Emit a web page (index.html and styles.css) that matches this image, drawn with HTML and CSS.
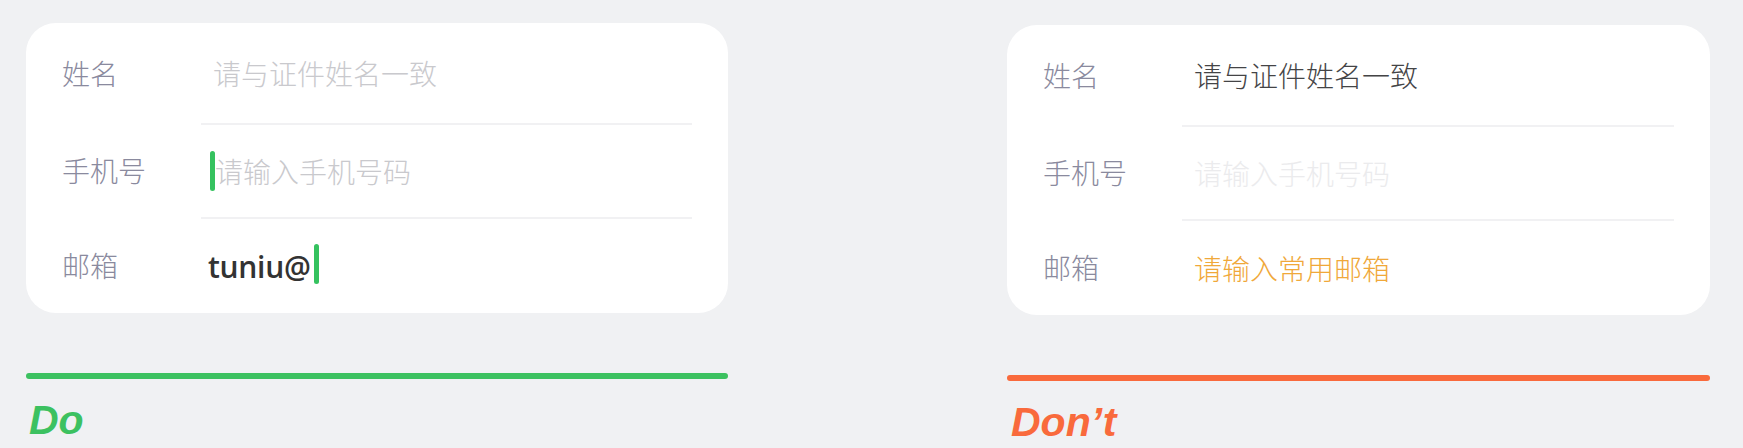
FILE: index.html
```html
<!DOCTYPE html>
<html lang="zh-CN">
<head>
<meta charset="utf-8">
<title>Form Do / Don't</title>
<link rel="stylesheet" href="styles.css">
</head>
<body>
<main class="page">
  <section class="example example--do">
    <div class="card">
      <div class="row">
        <div class="label">姓名</div>
        <div class="field"><span class="placeholder">请与证件姓名一致</span></div>
      </div>
      <div class="row">
        <div class="label">手机号</div>
        <div class="field field--line"><span class="caret caret--before"></span><span class="placeholder">请输入手机号码</span></div>
      </div>
      <div class="row">
        <div class="label">邮箱</div>
        <div class="field field--line"><span class="typed">tuniu@</span><span class="caret caret--after"></span></div>
      </div>
    </div>
    <div class="bar bar--do"></div>
    <div class="verdict verdict--do">Do</div>
  </section>

  <section class="example example--dont">
    <div class="card">
      <div class="row">
        <div class="label">姓名</div>
        <div class="field"><span class="value">请与证件姓名一致</span></div>
      </div>
      <div class="row">
        <div class="label">手机号</div>
        <div class="field field--line"><span class="placeholder placeholder--faint">请输入手机号码</span></div>
      </div>
      <div class="row">
        <div class="label">邮箱</div>
        <div class="field field--line"><span class="warn">请输入常用邮箱</span></div>
      </div>
    </div>
    <div class="bar bar--dont"></div>
    <div class="verdict verdict--dont">Don’t</div>
  </section>
</main>
</body>
</html>
```

FILE: styles.css
```css
* { box-sizing: border-box; }

html, body {
  margin: 0;
  padding: 0;
  background: #f0f1f3;
}

body {
  font-family: "Noto Sans CJK SC", "Noto Sans", sans-serif;
  width: 1743px;
  height: 448px;
  overflow: hidden;
}

.page {
  display: flex;
  gap: 279px;
  padding: 23px 0 0 26px;
}

.example {
  display: flex;
  flex-direction: column;
  width: 702px;
}

.example--dont {
  width: 703px;
  margin-top: 2px;
}

.card {
  background: #ffffff;
  border-radius: 30px;
  display: flex;
  flex-direction: column;
  height: 290px;
}

.row {
  display: flex;
  align-items: stretch;
  height: 96px;
}

.row:first-child { height: 100px; }
.row:nth-child(2) { height: 94px; }

.label {
  width: 175px;
  padding-left: 36px;
  display: flex;
  align-items: center;
  font-size: 28px;
  font-weight: 300;
  color: #8a8a9e;
  line-height: 1;
}

.field {
  flex: 1;
  margin-right: 36px;
  padding-left: 12px;
  display: flex;
  align-items: center;
  font-size: 28px;
  font-weight: 300;
  line-height: 1;
}

.field--line {
  border-top: 2px solid #f1f1f3;
}

.placeholder { color: #c9c9cd; }
.placeholder--faint { color: #ebebed; }
.value { color: #444446; }
.warn { color: #f0a83a; }

.typed {
  font-family: "Open Sans", "Liberation Sans", sans-serif;
  font-weight: 600;
  font-size: 30px;
  color: #333333;
  letter-spacing: -0.3px;
  line-height: 1;
  margin-left: -5px;
  padding-top: 2px;
}

.caret {
  display: inline-block;
  width: 5px;
  height: 40px;
  border-radius: 3px;
  background: #35c25f;
  flex-shrink: 0;
}

.caret--before {
  margin-left: -3px;
  margin-right: 0;
}

.caret--after {
  margin-left: 3px;
  margin-top: -4px;
}

.bar {
  height: 6px;
  border-radius: 3px;
  margin-top: 60px;
}

.bar--do { background: #3cc160; }
.bar--dont { background: #f96a3c; }

.verdict {
  font-family: "Liberation Sans", Arial, sans-serif;
  font-weight: 700;
  font-style: italic;
  font-size: 41px;
  line-height: 1;
  margin-top: 21px;
  padding-left: 3px;
}

.verdict--do { color: #3cc160; }
.verdict--dont { color: #f96a3c; padding-left: 4px; }
```
